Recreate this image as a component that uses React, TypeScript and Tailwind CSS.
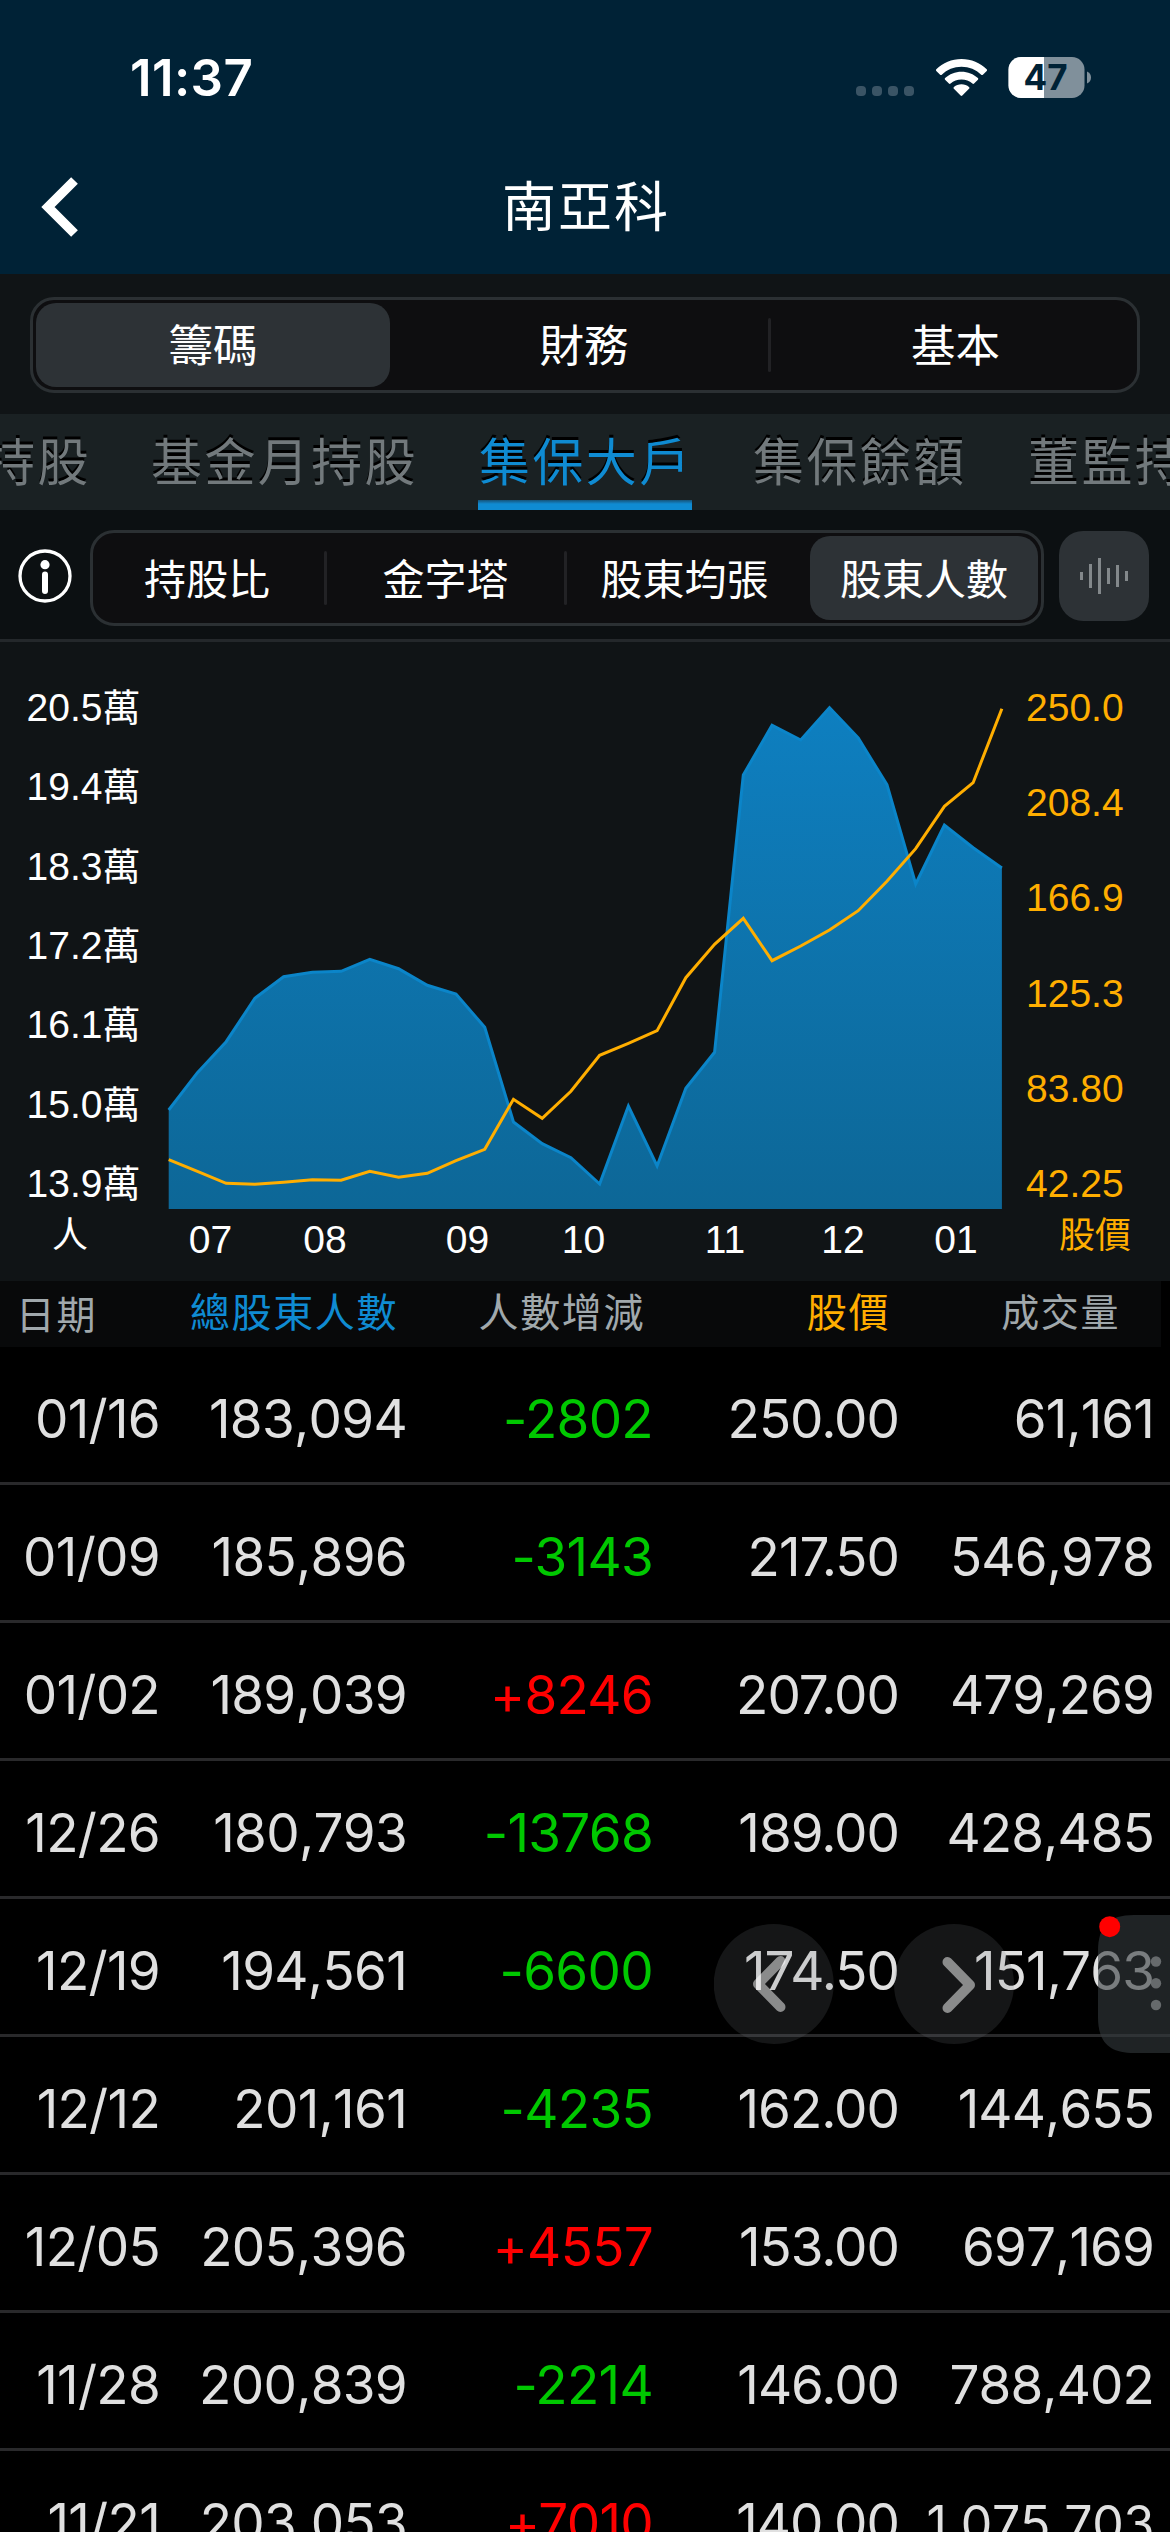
import { clsx } from "clsx";

const holders = [
  1110, 1072.7, 1041.7, 998.3, 976.7, 972.3, 971.3, 959.3, 968.7, 985.3, 994,
  1027.3, 1122, 1143.7, 1157.7, 1184, 1106, 1166, 1088.3, 1052.3, 775, 725.3,
  740, 707.7, 738, 784.7, 884, 825, 847.7, 868,
];

const prices = [
  1159.7, 1171.3, 1183.3, 1184.3, 1182.3, 1179.7, 1180.3, 1171.3, 1177.3,
  1173.3, 1160.7, 1149.3, 1099.3, 1118.3, 1091.3, 1055.3, 1043.3, 1030.7,
  977.7, 944.3, 918.3, 960.7, 946, 930, 910.7, 881.3, 848.7, 806.3, 782.7,
  708.7,
];

const holderTicks = ["20.5", "19.4", "18.3", "17.2", "16.1", "15.0", "13.9"];
const priceTicks = ["250.0", "208.4", "166.9", "125.3", "83.80", "42.25"];
const months = [
  { label: "07", x: 210.5 },
  { label: "08", x: 325 },
  { label: "09", x: 467.5 },
  { label: "10", x: 583.5 },
  { label: "11", x: 725 },
  { label: "12", x: 843 },
  { label: "01", x: 956 },
];

const rows = [
  { date: "01/16", total: "183,094", change: "-2802", price: "250.00", volume: "61,161" },
  { date: "01/09", total: "185,896", change: "-3143", price: "217.50", volume: "546,978" },
  { date: "01/02", total: "189,039", change: "+8246", price: "207.00", volume: "479,269" },
  { date: "12/26", total: "180,793", change: "-13768", price: "189.00", volume: "428,485" },
  { date: "12/19", total: "194,561", change: "-6600", price: "174.50", volume: "151,763" },
  { date: "12/12", total: "201,161", change: "-4235", price: "162.00", volume: "144,655" },
  { date: "12/05", total: "205,396", change: "+4557", price: "153.00", volume: "697,169" },
  { date: "11/28", total: "200,839", change: "-2214", price: "146.00", volume: "788,402" },
  { date: "11/21", total: "203,053", change: "+7010", price: "140.00", volume: "1,075,703" },
];

const toPoints = (values: number[]) =>
  values.map((y, i) => `${168.7 + i * 28.73},${y - 642}`).join(" ");

function StatusBar() {
  return (
    <div className="flex h-[154px] items-start justify-between pl-[130px] pr-[79px] pt-[48px]">
      <span className="font-['Inter'] text-[51px] font-semibold leading-[60px] tracking-[0.400px]">
        11:37
      </span>
      <svg width="236" height="60" viewBox="855 48 236 60">
        {[856, 872, 888, 904].map((x) => (
          <rect key={x} x={x} y="86" width="10" height="10" rx="4" fill="#3a5465" />
        ))}
        <g fill="#fff">
          <path d="M961.5 59c9.800 0 18.700 3.900 25.200 10.200.5.5.5 1.200 0 1.700l-3.800 3.800c-.5.5-1.200.5-1.700 0-5.200-4.900-12.100-7.900-19.700-7.900s-14.500 3-19.700 7.900c-.5.5-1.200.5-1.700 0l-3.800-3.800c-.5-.5-.5-1.200 0-1.700C942.800 62.900 951.700 59 961.500 59z" />
          <path d="M961.500 71.700c6.300 0 12 2.400 16.400 6.400.5.500.5 1.200 0 1.700l-3.800 3.800c-.5.500-1.200.5-1.700 0-2.900-2.600-6.700-4.100-10.900-4.100s-8 1.500-10.900 4.100c-.5.500-1.200.5-1.700 0l-3.800-3.800c-.5-.5-.5-1.200 0-1.700 4.400-4 10.100-6.400 16.400-6.400z" />
          <path d="M961.500 84.200c2.900 0 5.500 1 7.500 2.700.6.500.6 1.300 0 1.800l-6.700 6.900c-.5.500-1.200.5-1.700 0l-6.700-6.900c-.5-.5-.5-1.300 0-1.800 2.100-1.700 4.700-2.700 7.600-2.700z" />
        </g>
        <clipPath id="battery">
          <rect x="1008.500" y="57" width="76" height="41" rx="12.500" />
        </clipPath>
        <g clipPath="url(#battery)">
          <rect x="1008" y="57" width="77" height="41" fill="#80909b" />
          <rect x="1008" y="57" width="36" height="41" fill="#fff" />
        </g>
        <path d="M1087 71.500c2.500 1 4 3.300 4 6s-1.500 5-4 6z" fill="#80909b" />
        <text
          x="1045.500"
          y="90"
          textAnchor="middle"
          className="fill-[#002236] font-['Inter'] text-[35px] font-bold"
        >
          47
        </text>
      </svg>
    </div>
  );
}

function TitleBar() {
  return (
    <div className="relative flex h-[120px] items-center justify-center">
      <svg className="absolute left-[36px] top-[18px]" width="50" height="70" viewBox="36 172 50 70">
        <path d="M74.500 180.500 48 207l26.500 26.500" fill="none" stroke="#fff" strokeWidth="9.500" />
      </svg>
      <h1 className="pb-[20px] pl-[2px] text-[54px] leading-[80px] tracking-[2px]">南亞科</h1>
    </div>
  );
}

function Chart() {
  return (
    <svg
      className="block bg-[#101416] font-['Liberation_Sans','Noto_Sans_CJK_TC',sans-serif] text-[39px]"
      width="1170"
      height="639"
      viewBox="0 0 1170 639"
    >
      <defs>
        <linearGradient id="area" x1="0" y1="65" x2="0" y2="567" gradientUnits="userSpaceOnUse">
          <stop offset="0" stopColor="#0e7fc0" />
          <stop offset="1" stopColor="#0d6797" />
        </linearGradient>
      </defs>
      <polygon points={`168.700,567 ${toPoints(holders)} 1001.900,567`} fill="url(#area)" />
      <polyline points={toPoints(holders)} fill="none" stroke="#0b85c9" strokeWidth="3" />
      <polyline points={toPoints(prices)} fill="none" stroke="#ffae00" strokeWidth="3" />
      {holderTicks.map((tick, i) => (
        <text key={tick} x="26.500" y={79 + i * 79.33} fill="#fff">
          {tick}
          <tspan className="text-[38px]" x="102.500">
            萬
          </tspan>
        </text>
      ))}
      {priceTicks.map((tick, i) => (
        <text key={tick} x="1026" y={79 + i * 95.2} fill="#ffae00">
          {tick}
        </text>
      ))}
      {months.map((month) => (
        <text key={month.label} x={month.x} y="611" textAnchor="middle" fill="#fff">
          {month.label}
        </text>
      ))}
      <text x="70" y="606" textAnchor="middle" fill="#fff" className="text-[36px]">
        人
      </text>
      <text x="1095" y="606" textAnchor="middle" fill="#ffae00" className="text-[36px]">
        股價
      </text>
    </svg>
  );
}

function Table() {
  return (
    <section>
      <div className="grid h-[66px] w-[1161px] grid-cols-[97px_301px_247px_245px_230px] items-center bg-[#08090a] pb-[14px] text-right text-[40px] leading-[52px] tracking-[1.600px] text-[#a0a8ac]">
        <span className="pt-[5px] text-[39px]">日期</span>
        <span className="text-[#0f8bd2]">總股東人數</span>
        <span>人數增減</span>
        <span className="text-[#ffae00]">股價</span>
        <span className="text-[38px]">成交量</span>
      </div>
      {rows.map((row) => (
        <div
          key={row.date}
          className="grid h-[138px] grid-cols-[160px_247px_246px_246px_255px] items-center border-b-[3px] border-[#29292b] pt-[9px] text-right font-['Inter'] text-[53px] leading-[64px] tracking-[-0.700px] text-[#e0e0e0]"
        >
          <span>{row.date}</span>
          <span className="[font-kerning:none]">{row.total}</span>
          <span className={clsx(row.change.startsWith("+") ? "text-[#ff0000]" : "text-[#00c800]")}>
            {row.change}
          </span>
          <span className="tracking-[-1px]">{row.price}</span>
          <span
            className={clsx(
              "[font-kerning:none]",
              row.volume.length > 7 ? "pt-[2px] text-[50px] tracking-[-0.300px]" : "tracking-[-0.900px]"
            )}
          >
            {row.volume}
          </span>
        </div>
      ))}
    </section>
  );
}

function FloatingControls() {
  return (
    <div className="absolute right-0 top-[1915px] h-[138px] w-[456px]">
      <svg width="456" height="138" viewBox="714 1915 456 138">
        <circle cx="773.700" cy="1984" r="60" fill="#747880" fillOpacity="0.180" />
        <circle cx="954" cy="1984" r="60" fill="#747880" fillOpacity="0.180" />
        <g
          fill="none"
          stroke="#fff"
          strokeOpacity="0.500"
          strokeWidth="10"
          strokeLinecap="round"
          strokeLinejoin="round"
        >
          <path d="M780.500 1961 758 1984l22.500 23" />
          <path d="M947.500 1962 970 1985l-22.500 23" />
        </g>
        <path
          d="M1170 1915h-36c-25 0-36 11-36 36v66c0 25 11 36 36 36h36z"
          fill="#343a3d"
          fillOpacity="0.600"
        />
        {[1961.5, 1983.3, 2005].map((cy) => (
          <circle key={cy} cx="1156" cy={cy} r="5.200" fill="#737779" fillOpacity="0.850" />
        ))}
        <circle cx="1109.700" cy="1926.700" r="10.500" fill="#f00" />
      </svg>
    </div>
  );
}

export default function App() {
  return (
    <main className="relative h-[2532px] w-[1170px] overflow-hidden bg-black font-['Noto_Sans_CJK_TC',sans-serif] text-white">
      <header className="h-[274px] bg-[#002236]">
        <StatusBar />
        <TitleBar />
      </header>

      <div className="h-[140px] bg-[#101416] px-[30px] pt-[23px]">
        <div className="flex h-[96px] items-center rounded-[24px] border-[3px] border-[#2b3033] bg-[#0e0e10] px-[3px] text-[44.500px]">
          <div className="flex h-[84px] w-[354px] items-center justify-center rounded-[20px] bg-[#2d3236] pb-[4px]">
            籌碼
          </div>
          <div className="flex flex-1 items-center justify-center pb-[4px] pl-[10px]">財務</div>
          <div className="h-[54px] w-[3px] rounded bg-[#222225]" />
          <div className="flex w-[363px] items-center justify-center pb-[4px] pl-[6px]">基本</div>
        </div>
      </div>

      {/* Scrolled tab strip, cut off on both sides */}
      <nav className="flex h-[96px] overflow-hidden whitespace-nowrap bg-[#1a2123] text-[51px] leading-[90px] tracking-[2.400px] text-[#72797c] text-shadow-[0_-3px_0_#000]">
        <span className="ml-[-16px] w-[167px] shrink-0">持股</span>
        <span className="w-[327px] shrink-0">基金月持股</span>
        <span className="flex w-[214px] shrink-0 flex-col">
          <span className="h-[86px] pl-px text-[#0f8bd2]">集保大戶</span>
          <span className="h-[10px] bg-linear-to-b from-[#14547a] to-[#0f8bd2] to-40%" />
        </span>
        <span className="w-[275px] shrink-0 pl-[61px]">集保餘額</span>
        <span className="shrink-0 pl-[61px]">董監持股</span>
      </nav>

      <div className="flex h-[132px] items-start border-b-[3px] border-[#24282b] bg-[#0c1012] pt-[20px]">
        <svg className="ml-[17px] mt-[18px]" width="56" height="56" viewBox="0 0 56 56">
          <circle cx="28" cy="28" r="25" fill="none" stroke="#fff" strokeWidth="3.300" />
          <circle cx="28" cy="16.700" r="4.600" fill="#fff" />
          <path d="M28 26.500v16.500" stroke="#fff" strokeWidth="6" strokeLinecap="round" />
        </svg>
        <div className="ml-[17px] flex h-[96px] w-[954px] items-center rounded-[24px] border-[3px] border-[#2b3033] bg-[#0e0e10] pr-[3px] text-[42px]">
          <div className="flex w-[231px] items-center justify-center pb-[4px] pr-[3px]">持股比</div>
          <div className="h-[54px] w-[3px] rounded bg-[#222225]" />
          <div className="flex w-[237px] items-center justify-center pb-[4px]">金字塔</div>
          <div className="h-[54px] w-[3px] rounded bg-[#222225]" />
          <div className="flex flex-1 items-center justify-center pb-[4px] pr-[8px]">股東均張</div>
          <div className="flex h-[84px] w-[228px] items-center justify-center rounded-[20px] bg-[#2d3236] pb-[4px]">
            股東人數
          </div>
        </div>
        <div className="ml-[15px] mt-px size-[90px] rounded-[24px] bg-[#2d3236]">
          <svg width="90" height="90" viewBox="1059 531 90 90" stroke="#83888b" strokeWidth="3">
            <path d="M1081.500 572v8M1090.500 564v24M1099.500 558v36M1108.500 568v16M1117.500 565v22M1126.500 571v10" />
          </svg>
        </div>
      </div>

      <Chart />
      <Table />
      <FloatingControls />
    </main>
  );
}
